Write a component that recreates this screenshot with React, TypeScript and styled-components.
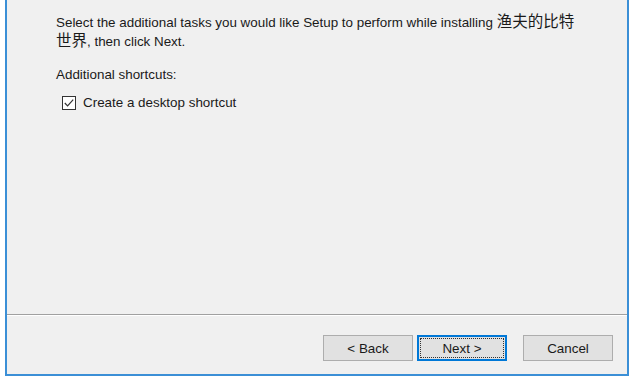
import React from "react";
import styled, { createGlobalStyle } from "styled-components";

const Global = createGlobalStyle`
  html, body { margin: 0; padding: 0; background: #ffffff; }
  #root { width: 636px; height: 383px; }
`;

const Window = styled.div`
  box-sizing: border-box;
  margin-left: 5px;
  width: 624px;
  height: 376px;
  background: #f0f0f0;
  border: 2px solid #3b8fd6;
  border-top: none;
  display: flex;
  flex-direction: column;
  font-family: "Liberation Sans", "Noto Sans CJK SC", sans-serif;
  font-size: 13.4px;
  color: #1a1a1a;
`;

const Body = styled.div`
  flex: 1;
  padding: 13px 30px 0 49px;
  display: flex;
  flex-direction: column;
`;

const Intro = styled.p`
  margin: 0;
  line-height: 18px;
`;

const Cjk = styled.span`
  font-family: "Noto Sans CJK SC", sans-serif;
  font-size: 15.5px;
  line-height: 1;
`;

const Label = styled.div`
  margin-top: 15px;
  line-height: 18px;
`;

const CheckRow = styled.label`
  display: flex;
  align-items: center;
  gap: 7px;
  margin-top: 10px;
  margin-left: 6px;
  line-height: 18px;
`;

const Box = styled.span`
  box-sizing: border-box;
  width: 14px;
  height: 14px;
  border: 1px solid #333;
  background: #fff;
  display: flex;
  align-items: center;
  justify-content: center;
`;

const Separator = styled.div`
  height: 1px;
  background: #a0a0a0;
  border-bottom: 1px solid #ffffff;
`;

const Footer = styled.div`
  flex: 0 0 58px;
  display: flex;
  align-items: flex-start;
  justify-content: flex-end;
  padding-right: 14px;
  padding-top: 19px;
  box-sizing: border-box;
`;

const Button = styled.button<{ $primary?: boolean; $gap?: number }>`
  box-sizing: border-box;
  width: 90px;
  height: 26px;
  margin-left: ${(p) => p.$gap ?? 0}px;
  background: #e1e1e1;
  border: ${(p) => (p.$primary ? "2px solid #0078d7" : "1px solid #adadad")};
  font-family: inherit;
  font-size: 13.4px;
  color: #1a1a1a;
  padding: 0;
  position: relative;
  ${(p) =>
    p.$primary
      ? `&::after { content: ""; position: absolute; inset: 1px; border: 1px dotted #333; }`
      : ""}
`;

export default function App() {
  return (
    <>
      <Global />
      <Window>
        <Body>
          <Intro>
            Select the additional tasks you would like Setup to perform while installing <Cjk>渔夫的比特</Cjk>
            <br />
            <Cjk>世界</Cjk>, then click Next.
          </Intro>
          <Label>Additional shortcuts:</Label>
          <CheckRow>
            <Box>
              <svg width="12" height="12" viewBox="0 0 12 12">
                <path d="M1.8 6 L4.6 8.8 L10.2 2.6" fill="none" stroke="#333" strokeWidth="1.2" />
              </svg>
            </Box>
            Create a desktop shortcut
          </CheckRow>
        </Body>
        <Separator />
        <Footer>
          <Button>&lt; Back</Button>
          <Button $primary $gap={4}>Next &gt;</Button>
          <Button $gap={16}>Cancel</Button>
        </Footer>
      </Window>
    </>
  );
}
